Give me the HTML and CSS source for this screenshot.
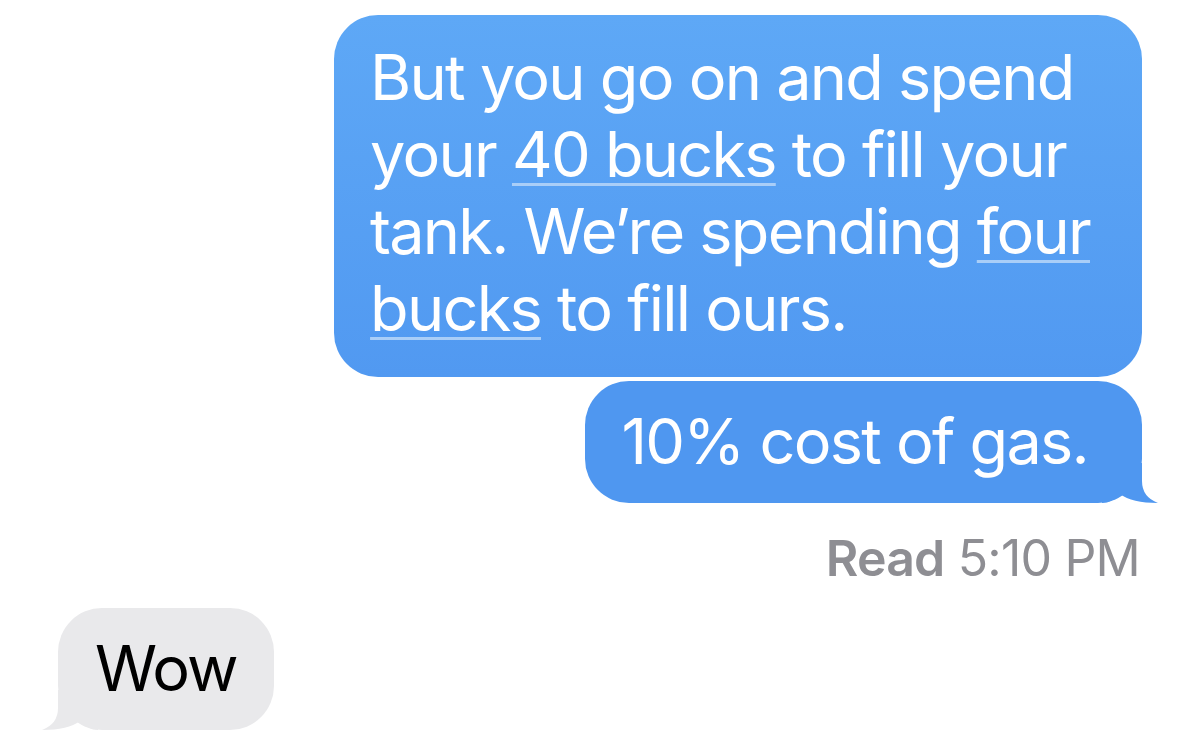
FILE: index.html
```html
<!DOCTYPE html>
<html lang="en">
<head>
    <meta charset="UTF-8">
    <title>Messages</title>
    <link rel="stylesheet" href="styles.css">
</head>
<body>
    <div class="thread">
        <div class="bubble sent first">
            But you go on and spend<br>
            your <span class="link">40 bucks</span> to fill your<br>
            tank. We’re spending <span class="link">four</span><br>
            <span class="link">bucks</span> to fill ours.
        </div>
        <div class="bubble sent last">
            10% cost of gas.
            <svg class="tail tail-right" width="56" height="40" viewBox="0 0 56 40">
                <path d="M0 40 Q10 40 18 31 Q30 40 56 40 Q40 34 40 18 L40 0 L0 0 Z" fill="#4f97f0"/>
            </svg>
        </div>
        <div class="status"><b>Read</b> 5:10 PM</div>
        <div class="bubble received">
            Wow
            <svg class="tail tail-left" width="56" height="40" viewBox="0 0 56 40">
                <path d="M56 40 Q46 40 38 31 Q26 40 0 40 Q16 34 16 18 L16 0 L56 0 Z" fill="#e9e9eb"/>
            </svg>
        </div>
    </div>
</body>
</html>
```

FILE: styles.css
```css
body {
    margin: 0;
    background: #fff;
    font-family: "Inter", "Roboto", sans-serif;
}
.thread {
    display: flex;
    flex-direction: column;
    padding: 15px 58px 0 58px;
}
.bubble {
    position: relative;
    font-size: 63px;
    line-height: 77px;
    border-radius: 44px;
    letter-spacing: -1.75px;
}
.sent {
    align-self: flex-end;
    color: #fff;
    padding: 24px 52px 30px 36px;
}
.first {
    background: linear-gradient(#5ea8f6, #5199f1);
}
.last {
    margin-top: 4px;
    background: #4f97f0;
    padding: 22px 54px 23px 36px;
}
.link {
    text-decoration: underline;
    text-decoration-color: #a9cef8;
    text-decoration-thickness: 3px;
    text-underline-offset: 6px;
}
.tail {
    position: absolute;
    bottom: 0;
}
.tail-right {
    right: -16px;
}
.tail-left {
    left: -16px;
}
.status {
    align-self: flex-end;
    margin: 25px 2px 0 0;
    font-size: 50px;
    line-height: 60px;
    color: #8e8e93;
    letter-spacing: -0.8px;
}
.status b {
    font-weight: 600;
}
.received {
    align-self: flex-start;
    margin-top: 20px;
    background: #e9e9eb;
    color: #000;
    padding: 22px 37px 23px 37px;
}
```
